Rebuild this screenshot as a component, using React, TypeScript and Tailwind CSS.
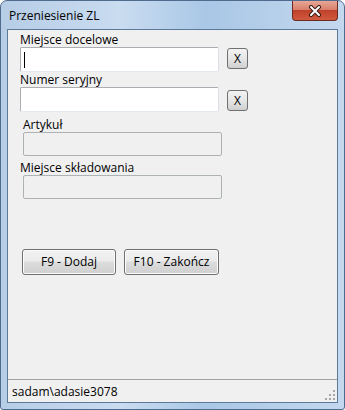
import React from "react";

const font = { fontFamily: '"Open Sans", "Noto Sans", sans-serif' };

function ClearButton() {
  return (
    <button className="ml-[8px] mt-[1px] w-[21px] h-[21px] rounded-[3px] border border-[#707070] bg-gradient-to-b from-[#f2f2f2] via-[#e6e6e6] to-[#d0d0d0] text-[12px] leading-none text-black flex items-center justify-center">
      X
    </button>
  );
}

function WinButton({ label, className }: { label: string; className?: string }) {
  return (
    <button
      className={
        "h-[26px] rounded-[3px] border border-[#707070] bg-[linear-gradient(#f2f2f2_0%,#ebebeb_45%,#dddddd_50%,#cfcfcf_100%)] text-[12px] text-black shadow-[inset_0_0_0_1px_#fcfcfc] " +
        (className || "")
      }
    >
      {label}
    </button>
  );
}

export default function App() {
  return (
    <div
      style={font}
      className="w-[345px] h-[410px] flex flex-col rounded-t-[7px] rounded-b-[3px] border border-[#4f6c8e] bg-[linear-gradient(90deg,#b6cde6_0%,#c9dcf0_35%,#a9c7e6_60%,#c4d8ee_100%)] px-[6px] pb-[6px] overflow-hidden"
    >
      <div className="h-[28px] flex items-start justify-between shrink-0">
        <span className="ml-[2px] mt-[7px] text-[12px] leading-[15px] text-black">Przeniesienie ZL</span>
        <div className="mt-0 w-[46px] h-[20px] rounded-b-[4px] border border-t-0 border-[#6d2a22] bg-[linear-gradient(#e6a797_0%,#d9806b_45%,#c0412b_50%,#cf5a3e_100%)] flex items-center justify-center">
          <svg width="14" height="12" viewBox="0 0 14 12">
            <path d="M3 2 L11 10 M11 2 L3 10" stroke="#3b1b16" strokeWidth="4" strokeLinecap="round" />
            <path d="M3 2 L11 10 M11 2 L3 10" stroke="#ffffff" strokeWidth="2" strokeLinecap="round" />
          </svg>
        </div>
      </div>

      <div className="flex-1 flex flex-col border border-[#5d7999] bg-[#f0f0f0]">
        <div className="flex flex-col pt-[2px]">
          <span className="ml-[12px] text-[12px] leading-[15px] text-black">Miejsce docelowe</span>
          <div className="flex items-start ml-[12px]">
            <div className="w-[199px] h-[25px] rounded-[2px] border border-[#abadb3] border-r-[#dbdfe6] border-b-[#e3e9ef] bg-white flex items-center pl-[3px]">
              <div className="w-px h-[16px] bg-black" />
            </div>
            <ClearButton />
          </div>

          <span className="ml-[12px] mt-[0px] text-[12px] leading-[15px] text-black">Numer seryjny</span>
          <div className="flex items-start ml-[12px]">
            <div className="w-[199px] h-[25px] rounded-[2px] border border-[#abadb3] border-r-[#dbdfe6] border-b-[#e3e9ef] bg-white" />
            <div className="mt-[2px]">
              <ClearButton />
            </div>
          </div>

          <span className="ml-[15px] mt-[5px] text-[12px] leading-[15px] text-black">Artykuł</span>
          <div className="ml-[15px] w-[199px] h-[24px] rounded-[2px] border border-[#adb2b5] bg-[#f0f0f0]" />

          <span className="ml-[12px] mt-[4px] text-[12px] leading-[15px] text-black">Miejsce składowania</span>
          <div className="ml-[15px] w-[199px] h-[24px] rounded-[2px] border border-[#adb2b5] bg-[#f0f0f0]" />

          <div className="flex ml-[14px] mt-[50px] gap-[8px]">
            <WinButton label="F9 - Dodaj" className="w-[94px]" />
            <WinButton label="F10 - Zakończ" className="w-[95px]" />
          </div>
        </div>

        <div className="flex-1" />

        <div className="h-[23px] border-t border-[#a0a0a0] flex items-center justify-between shrink-0">
          <span className="ml-[4px] text-[12px] leading-[15px] text-black">sadam\adasie3078</span>
          <svg width="12" height="12" viewBox="0 0 12 12" className="mr-[1px] mt-[8px]">
            <g fill="#a7a7a7">
              <rect x="9" y="1" width="2" height="2" />
              <rect x="5" y="5" width="2" height="2" />
              <rect x="9" y="5" width="2" height="2" />
              <rect x="1" y="9" width="2" height="2" />
              <rect x="5" y="9" width="2" height="2" />
              <rect x="9" y="9" width="2" height="2" />
            </g>
          </svg>
        </div>
      </div>
    </div>
  );
}
